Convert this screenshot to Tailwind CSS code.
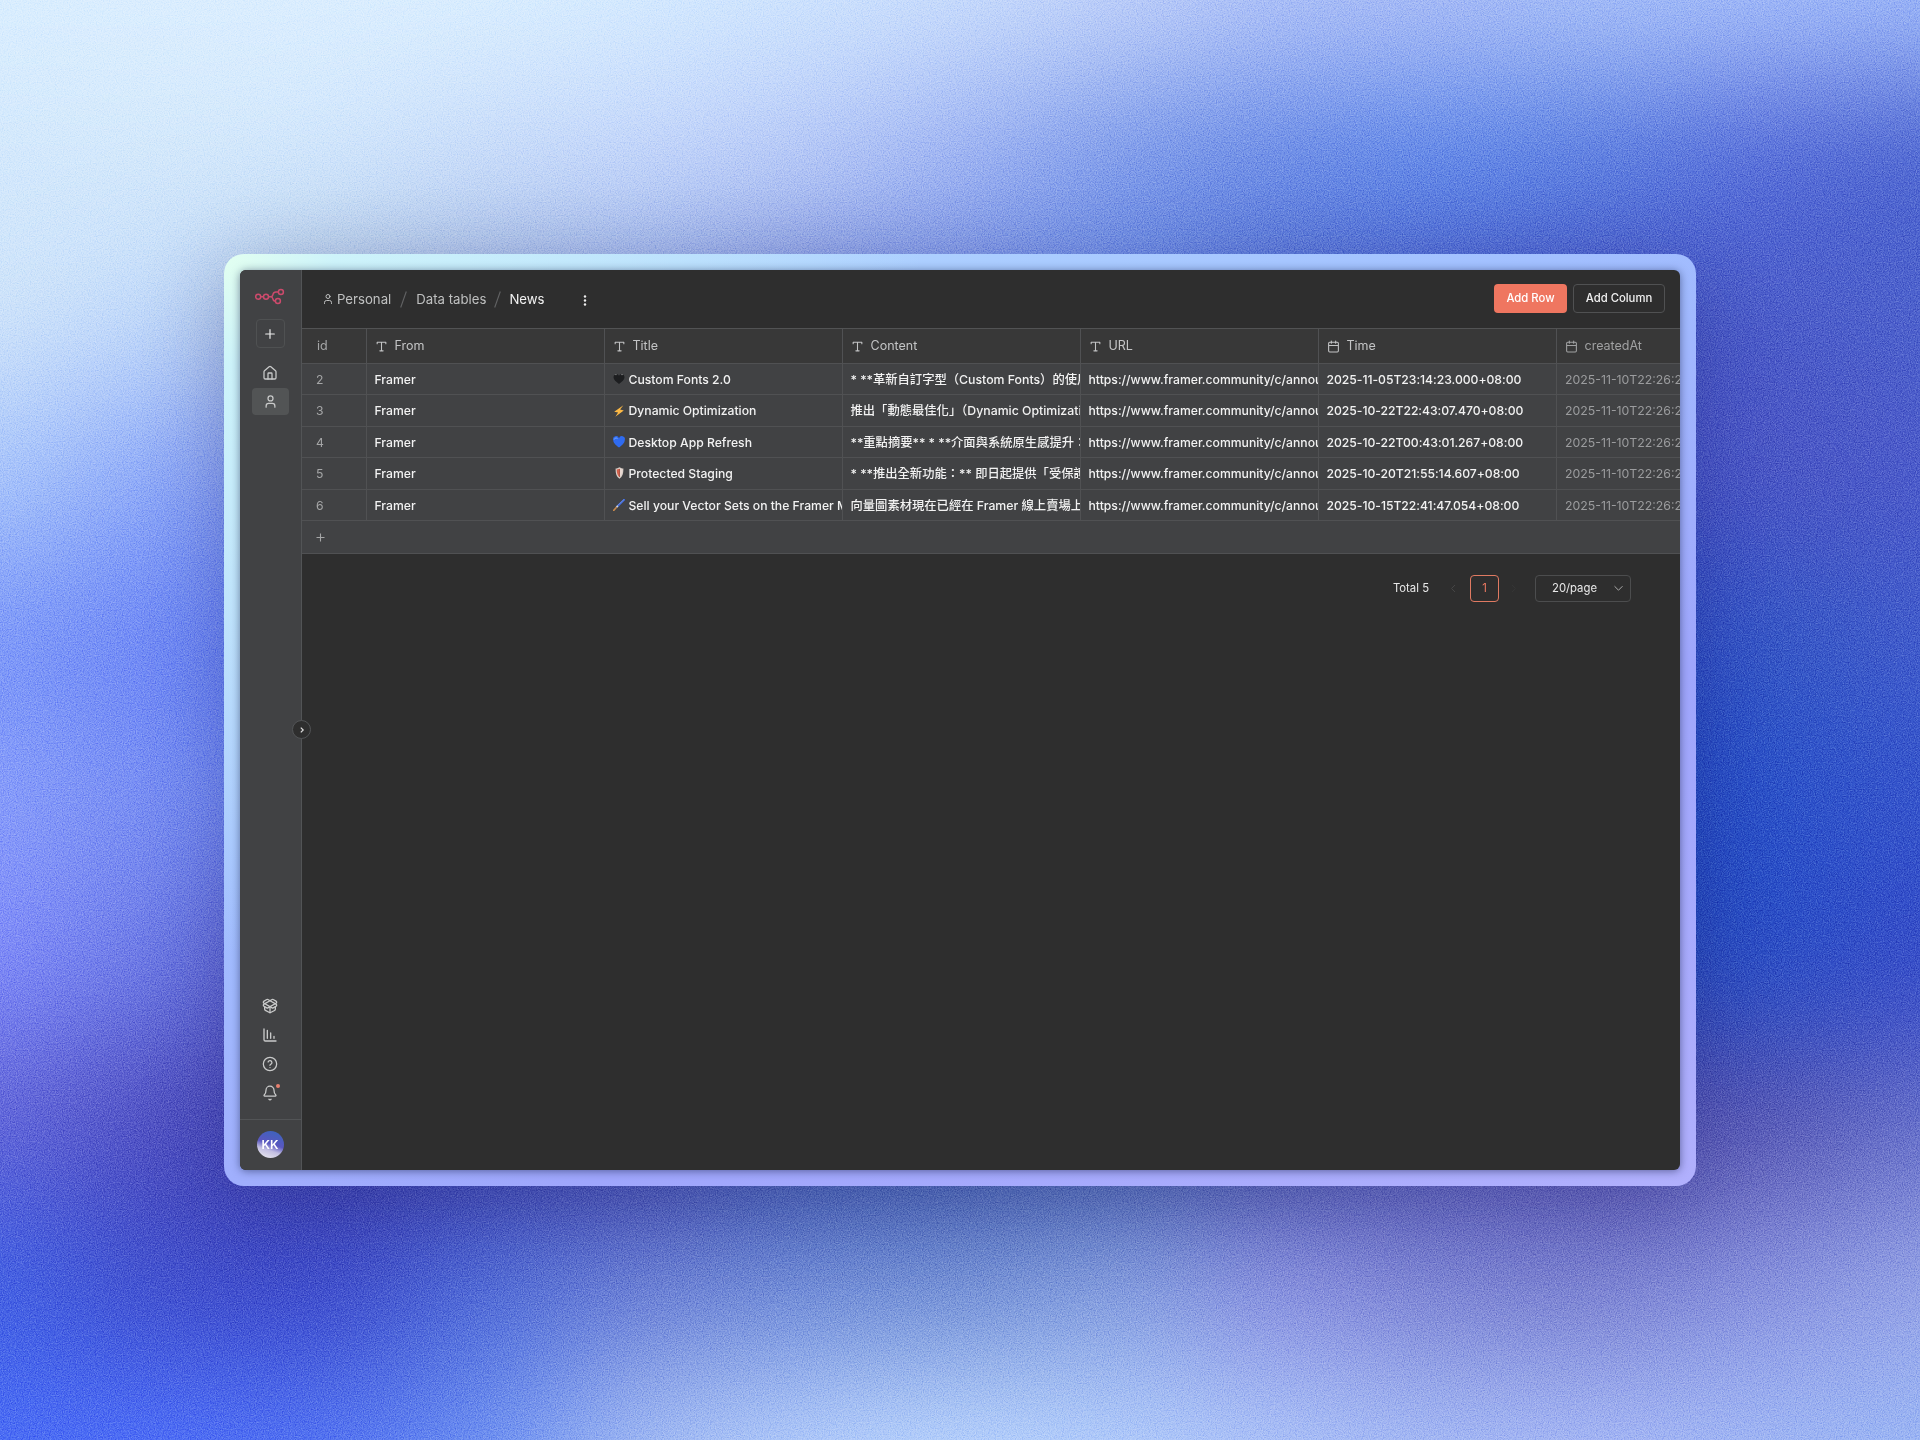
<!DOCTYPE html>
<html lang="zh-Hant">
<head>
<meta charset="utf-8">
<title>News - Data tables</title>
<script src="https://cdn.jsdelivr.net/npm/@tailwindcss/browser@4"></script>
</head>
<body class="relative h-[1440px] w-[1920px] overflow-hidden bg-[#5468d8] font-['Inter','Noto_Sans_CJK_TC',sans-serif] antialiased">
<canvas id="mesh" width="480" height="360" class="absolute inset-0 h-full w-full"></canvas>
<svg class="absolute inset-0 h-full w-full opacity-50 mix-blend-soft-light" aria-hidden="true">
  <filter id="grain" x="0" y="0" width="100%" height="100%" color-interpolation-filters="sRGB"><feTurbulence type="fractalNoise" baseFrequency="0.85" numOctaves="2" seed="4"/><feColorMatrix values="1.5 0 0 0 -0.23  1.5 0 0 0 -0.23  1.5 0 0 0 -0.23  0 0 0 0 1"/></filter>
  <rect width="100%" height="100%" filter="url(#grain)"/>
</svg>

<svg class="hidden">
  <symbol id="i-text" viewBox="0 0 24 24"><path d="M4 7V4h16v3M9 20h6M12 4v16" fill="none" stroke="currentColor" stroke-width="2" stroke-linecap="round" stroke-linejoin="round"/></symbol>
  <symbol id="i-cal" viewBox="0 0 24 24"><path d="M8 2v4M16 2v4M3 10h18M5 4h14a2 2 0 0 1 2 2v14a2 2 0 0 1-2 2H5a2 2 0 0 1-2-2V6a2 2 0 0 1 2-2z" fill="none" stroke="currentColor" stroke-width="2" stroke-linecap="round" stroke-linejoin="round"/></symbol>
  <symbol id="i-user" viewBox="0 0 24 24"><g fill="none" stroke="currentColor" stroke-width="2" stroke-linecap="round"><path d="M19 21v-2a4 4 0 0 0-4-4H9a4 4 0 0 0-4 4v2"/><circle cx="12" cy="7" r="4"/></g></symbol>
</svg>

<div class="relative flex h-full items-center justify-center">
  <div class="h-[932px] w-[1472px] rounded-[20px] bg-[radial-gradient(circle_at_0_0,#e2fff0_0,#cdf3fa_110px,transparent_700px),linear-gradient(155deg,#b8e0ff_0%,#a2c0ff_38%,#9fa6fc_68%,#b1b0fd_100%)] p-4 shadow-[0_20px_80px_rgba(20,24,100,0.3)]">
    <div class="relative flex h-[900px] w-[1440px] rounded-md bg-[#2e2e2e] shadow-[0_1px_8px_rgba(10,20,60,0.5)]">

      <aside class="flex w-[62px] shrink-0 flex-col items-center rounded-l-md border-r border-[#525456] bg-[#414244] pr-px text-[#c9caca]">
        <svg class="mt-[18px] h-[17px] w-[30px] text-[#cc4a6c]" viewBox="0 0 30 17" fill="none" stroke="currentColor" stroke-width="1.500"><circle cx="3.200" cy="8.800" r="2.500"/><circle cx="11" cy="8.800" r="2.500"/><circle cx="25.900" cy="4" r="2.500"/><circle cx="22.900" cy="13.100" r="2.500"/><path d="M5.700 8.800h2.800M13.500 8.800h2M23.400 4h-2.500c-2.600 0-2.600 1-3 2.800-.3 1.400-1 2-2.400 2 1.500 0 2.100.6 2.400 2 .3 1.600 1 2.300 2.500 2.300"/></svg>
        <button class="mt-[14px] flex size-[29px] items-center justify-center rounded border border-[#4f5152] text-[#ededed]"><svg class="size-[10px]" viewBox="0 0 10 10" stroke="currentColor" stroke-width="1.200" stroke-linecap="round"><path d="M5 .7v8.600M.7 5h8.600"/></svg></button>
        <div class="mt-[11px] flex h-[27px] w-[37px] items-center justify-center"><svg class="size-[16px]" viewBox="0 0 24 24" fill="none" stroke="currentColor" stroke-width="1.900" stroke-linecap="round" stroke-linejoin="round"><path d="M15 21v-8a1 1 0 0 0-1-1h-4a1 1 0 0 0-1 1v8"/><path d="M3 10a2 2 0 0 1 .7-1.500l7-6a2 2 0 0 1 2.600 0l7 6A2 2 0 0 1 21 10v9a2 2 0 0 1-2 2H5a2 2 0 0 1-2-2z"/></svg></div>
        <div class="mt-[1.500px] flex h-[27px] w-[37px] items-center justify-center rounded bg-[#525455]"><svg class="h-[15px] w-[15px]"><use href="#i-user"/></svg></div>

        <div class="mt-auto flex flex-col items-center gap-[12.700px] pb-[18.500px]">
          <svg class="size-4" viewBox="0 0 24 24" fill="none" stroke="currentColor" stroke-width="2" stroke-linecap="round" stroke-linejoin="round"><path d="M12 22v-9M15.170 2.210a1.670 1.670 0 0 1 1.630 0L21 4.570a1.930 1.930 0 0 1 0 3.360L8.820 14.790a1.655 1.655 0 0 1-1.640 0L3 12.430a1.930 1.930 0 0 1 0-3.360z"/><path d="M20 13v3.870a2.060 2.060 0 0 1-1.110 1.830l-6 3.080a1.930 1.930 0 0 1-1.780 0l-6-3.080A2.060 2.060 0 0 1 4 16.870V13"/><path d="M21 12.430a1.930 1.930 0 0 0 0-3.360L8.830 2.200a1.640 1.640 0 0 0-1.630 0L3 4.570a1.930 1.930 0 0 0 0 3.360l12.180 6.860a1.636 1.636 0 0 0 1.630 0z"/></svg>
          <svg class="size-4" viewBox="0 0 24 24" fill="none" stroke="currentColor" stroke-width="2" stroke-linecap="round" stroke-linejoin="round"><path d="M13 17V9M18 17v-3M3 3v16a2 2 0 0 0 2 2h16M8 17V5"/></svg>
          <svg class="size-4" viewBox="0 0 24 24" fill="none" stroke="currentColor" stroke-width="1.900" stroke-linecap="round"><circle cx="12" cy="12" r="10"/><path d="M9.100 9a3 3 0 0 1 5.800 1c0 2-3 2.500-3 4M12 17.300h.01"/></svg>
          <div class="relative size-4"><svg class="size-4" viewBox="0 0 24 24" fill="none" stroke="currentColor" stroke-width="1.900" stroke-linecap="round" stroke-linejoin="round"><path d="M10.300 21.300a2 2 0 0 0 3.400 0M3.300 15.100A1 1 0 0 0 4 16.800h16a1 1 0 0 0 .7-1.700C19.400 13.800 18 12.300 18 7.800A6 6 0 0 0 6 7.800c0 4.500-1.400 6-2.700 7.300z"/></svg><span class="absolute -top-px left-[14px] size-1 rounded-full bg-[#e8806f]"></span></div>
        </div>
        <div class="-mr-px flex h-[51px] w-[61px] items-center justify-center border-t border-[#525456] pb-px pr-px"><div class="flex size-[27px] items-center justify-center rounded-full bg-[linear-gradient(18deg,#e4e2ec_8%,#c3bfe2_32%,#5a57c0_52%,#3e63bd_92%)] text-xs font-semibold text-white">KK</div></div>
      </aside>

      <main class="flex min-w-0 flex-1 flex-col overflow-hidden rounded-r-md">
        <header class="flex h-[58px] shrink-0 items-center pl-[20px] pr-[15px]">
          <nav class="flex items-center pt-px text-[13.200px] text-[#bfc0c0]">
            <svg class="mr-[3px] size-[12px]"><use href="#i-user"/></svg><span>Personal</span>
            <svg class="mx-[9px] h-[17px] w-[7px] text-[#626364]" viewBox="0 0 7 17" stroke="currentColor" stroke-width="1.100"><path d="M6.300.5.700 16.500"/></svg><span>Data tables</span>
            <svg class="mx-[8px] h-[17px] w-[7px] text-[#626364]" viewBox="0 0 7 17" stroke="currentColor" stroke-width="1.100"><path d="M6.300.5.700 16.500"/></svg><span class="text-[#f2f2f2]">News</span>
            <svg class="ml-[38px] mt-[1.500px] h-[11px] w-[4px] text-[#eee]" viewBox="0 0 4 11" fill="currentColor"><circle cx="2" cy="1.500" r="1.200"/><circle cx="2" cy="5.500" r="1.200"/><circle cx="2" cy="9.500" r="1.200"/></svg>
          </nav>
          <div class="mb-px ml-auto flex gap-[6px] text-[11.300px] font-medium">
            <button class="h-[29px] w-[73px] rounded bg-[#ef7660] text-white">Add Row</button>
            <button class="h-[29px] w-[92px] rounded border border-[#505152] text-[#f0f0f0]">Add Column</button>
          </div>
        </header>
        <div id="table" class="border-t border-[#525354]"></div>
        <div class="flex h-[69px] items-center pr-[49.500px] text-[11.300px] text-[#e8e8e8]">
          <span class="ml-auto">Total 5</span>
          <svg class="ml-[20px] size-[9px] text-[#454545]" viewBox="0 0 9 9" fill="none" stroke="currentColor"><path d="M6 1 2.500 4.500 6 8"/></svg>
          <span class="ml-[12px] flex h-[27px] w-[29px] items-center justify-center rounded border border-[#e07a62] text-[#ee7a62]">1</span>
          <svg class="ml-[10px] size-[9px] text-[#353535]" viewBox="0 0 9 9" fill="none" stroke="currentColor"><path d="M3 1l3.500 3.500L3 8"/></svg>
          <span class="ml-[17px] flex h-[27px] w-[95.500px] items-center justify-between rounded border border-[#4c4d4e] pl-4 pr-[7px]">20/page<svg class="size-[9px] text-[#aaa]" viewBox="0 0 9 9" fill="none" stroke="currentColor" stroke-linecap="round"><path d="M.8 2.500 4.500 6.200 8.200 2.500"/></svg></span>
        </div>
      </main>

      <button class="absolute left-[52px] top-[450px] flex size-[19px] items-center justify-center rounded-full border border-[#525456] bg-[#2e2e2e] text-[#ddd]"><svg class="size-[6px]" viewBox="0 0 6 6" fill="none" stroke="currentColor" stroke-width="1.200"><path d="M1.800.6 4.200 3 1.800 5.400"/></svg></button>
    </div>
  </div>
</div>

<script>
const icons = {
  heart: '<path d="M6 11C3 8.800.500 6.800.500 4A2.900 2.900 0 0 1 6 2.700 2.900 2.900 0 0 1 11.500 4c0 2.800-2.500 4.800-5.500 7z" fill="#1d1e20"/><path d="M1.800 1.600h2M8 1.600h2" stroke="#8a8b8d" stroke-width=".7"/>',
  bolt: '<path d="M10.400.300 1.200 6.800l3.900.8L2.300 11.700l8.500-6.300-3.700-.8z" fill="#fbb845"/>',
  blue: '<path d="M6 11.500C3 9.300.200 7 .200 4A3 3 0 0 1 6 2.300 3 3 0 0 1 11.800 4c0 3-2.800 5.300-5.800 7.500z" fill="#2f6bf0"/><path d="M1.200 3.500A2 2 0 0 1 4.500 2.600" stroke="#7fb0ff" fill="none"/>',
  shield: '<path d="M6.500.300c1.500 1 2.800 1.200 3.900 1.200 0 5-.8 8-3.900 10.200C3.300 9.500 2.600 6.500 2.600 1.500 3.700 1.500 5 1.300 6.500.300z" fill="#d9cfc8"/><path d="M6.500 1.600c-1 .7-1.900 1-2.800 1 .1 3.600.8 6 2.800 7.700z" fill="#d2614c"/><path d="M6.500 1.600c1 .7 1.900 1 2.800 1-.1 3.600-.8 6-2.800 7.700z" fill="#ead9d2"/><path d="M6.500 2v8" stroke="#a84a3a" stroke-width=".9"/>',
  brush: '<path d="M11.600.300 4.500 7.200" stroke="#3f68d8" stroke-width="1.900" stroke-linecap="round"/><path d="M11 .5 4.500 6.600" stroke="#9db4ee" stroke-width=".5"/><path d="M4.800 6.900 3.300 8.500" stroke="#cfd5dd" stroke-width="1.700"/><path d="M3.300 8.500.600 11.500" stroke="#c98a4d" stroke-width="1.600" stroke-linecap="round"/>'
};
const url = 'https://www.framer.community/c/announcements/';
const rows = [
  [2, 'heart', 'Custom Fonts 2.0', '* **革新自訂字型（Custom Fonts）的使用體驗', '2025-11-05T23:14:23.000+08:00'],
  [3, 'bolt', 'Dynamic Optimization', '推出「動態最佳化」（Dynamic Optimization）', '2025-10-22T22:43:07.470+08:00'],
  [4, 'blue', 'Desktop App Refresh', '**重點摘要** * **介面與系統原生感提升：**', '2025-10-22T00:43:01.267+08:00'],
  [5, 'shield', 'Protected Staging', '* **推出全新功能：** 即日起提供「受保護', '2025-10-20T21:55:14.607+08:00'],
  [6, 'brush', 'Sell your Vector Sets on the Framer Marketplace', '向量圖素材現在已經在 Framer 線上賣場上架', '2025-10-15T22:41:47.054+08:00']
];
const line = 'grid grid-cols-[65px_238px_238px_238px_238px_238px_124px] border-b border-[#505153] whitespace-nowrap';
const head = [['i-text','From'],['i-text','Title'],['i-text','Content'],['i-text','URL'],['i-cal','Time'],['i-cal','createdAt']];
let html = `<div class="${line} h-[35px] bg-[#383838] text-[12.500px] text-[#c3c4c5]"><div class="flex items-center border-r border-[#505153] pl-[15px] pt-[1.500px] text-[#a5a6a7]">id</div>` +
  head.map(([i, t], n) => `<div class="flex items-center border-r border-[#505153] pl-[7.500px] pt-[1.500px] ${n === 5 ? 'text-[#a0a1a2]' : ''}"><svg class="mr-[7px] size-[13px]"><use href="#${i}"/></svg>${t}</div>`).join('') + '</div>';
const cell = 'flex items-center overflow-hidden border-r border-[#505153] pl-[7.500px] pt-[2px] text-[#f2f2f2]';
html += rows.map(([id, ic, title, content, time]) => `<div class="${line} h-[31.400px] bg-[#414244] text-[12.200px] font-medium">
  <div class="flex items-center border-r border-[#505153] pl-[14px] pt-[2px] font-normal text-[#a5a6a7]">${id}</div>
  <div class="${cell}">Framer</div>
  <div class="${cell}"><svg class="mr-[4px] size-[12px] shrink-0 -translate-y-px" viewBox="0 0 12 12">${icons[ic]}</svg>${title}</div>
  <div class="${cell} text-[12.300px]">${content}</div>
  <div class="${cell}">${url}</div>
  <div class="${cell} tracking-[-0.03px]">${time}</div>
  <div class="flex items-center overflow-hidden pl-[8px] pt-[2px] text-[12.300px] font-normal text-[#9b9c9e]">2025-11-10T22:26:23.411Z</div></div>`).join('');
html += '<div class="flex h-[33px] items-center border-b border-[#505153] bg-[#414244] pl-[14px] pt-[1.500px] text-[#a5a6a7]"><svg class="size-[9px]" viewBox="0 0 9 9" stroke="currentColor" stroke-width="1.100"><path d="M4.500.5v8M.5 4.500h8"/></svg></div>';
document.getElementById('table').innerHTML = html;

// Background mesh: 13 x 10 control colours, smoothly interpolated
const mesh = [
 'd9edfe daedfe daedfe d8ecfe d3e8fe cce1fd c4d8fb b8cbf8 a8bdf6 a2b8f5 9fb8f6 9bb4f6 96b0f5',
 'd3e8fc d2e7fb cee3fa c6daf8 bfd2f8 b2c5f5 9cb2f1 819dea 6e8ee6 6488e6 5f7fe0 5a72da 546cd4',
 'cae0fa bdd5f8 b0c7e8 a2b8e4 94abe4 8399e0 7690e2 6a88e2 5a75d6 5066d0 4c5ecc 4b5cca 4c60cc',
 'a5c1fa 8ea9f7 88a0f0 88a0f0 809aea 7f9ae6 6c87e2 5f78de 566cd8 4e60d2 4858cd 4856c6 4a5aca',
 '7f9af8 718bf5 6a86f4 6a86f4 6a86f4 6a86f4 6a86f4 5f78de 566cd8 3e58d0 304cc8 3555c6 3f5acb',
 '859af9 768cf2 6f88f2 6a80e4 6a80e4 6a80e4 6a80e4 5f78de 4660d0 3050c8 254ac4 2a50c8 3453cb',
 '7c88f5 6a76e2 5c60cc 5a5cc8 5a60c8 5a60c8 5060c0 4c5cc0 4658bc 3850bc 2c4cbc 2e4ec4 384fc8',
 '6066da 5052c4 4a4cb8 4a4eb8 4c54b8 4a60b8 4c66b8 5068b8 5662ba 5c60be 5c5cbc 585cba 646eca',
 '4560e2 4252d0 404fcc 5068d4 687dd4 6f8ad6 7490d6 8098dc 848edc 7c84d4 7b82d2 858fdc 909ee4',
 '4a6cf4 4c6cf4 5272f0 6c8ef0 9ab4f2 acc6f8 b2cdfa aec8f9 a8bef6 a2b6f3 a2b4f3 9eb4f3 9ab4f3'
].map(r => r.split(' ').map(h => [0, 2, 4].map(i => parseInt(h.substr(i, 2), 16))));
const cv = document.getElementById('mesh'), cx = cv.getContext('2d'), img = cx.createImageData(480, 360);
const w = t => [(-t + 2*t*t - t*t*t) / 2, (2 - 5*t*t + 3*t*t*t) / 2, (t + 4*t*t - 3*t*t*t) / 2, (t*t*t - t*t) / 2];
const cl = (v, m) => Math.max(0, Math.min(m, v));
for (let y = 0; y < 360; y++) for (let x = 0; x < 480; x++) {
  const gx = x / 480 * 12, gy = y / 360 * 9, ix = Math.floor(gx), iy = Math.floor(gy), wx = w(gx - ix), wy = w(gy - iy), o = (y * 480 + x) * 4;
  const c = [0, 0, 0];
  for (let j = 0; j < 4; j++) for (let i = 0; i < 4; i++) {
    const p = mesh[cl(iy + j - 1, 9)][cl(ix + i - 1, 12)], k = wx[i] * wy[j];
    c[0] += p[0] * k; c[1] += p[1] * k; c[2] += p[2] * k;
  }
  img.data.set([c[0], c[1], c[2], 255], o);
}
cx.putImageData(img, 0, 0);
</script>
</body>
</html>
